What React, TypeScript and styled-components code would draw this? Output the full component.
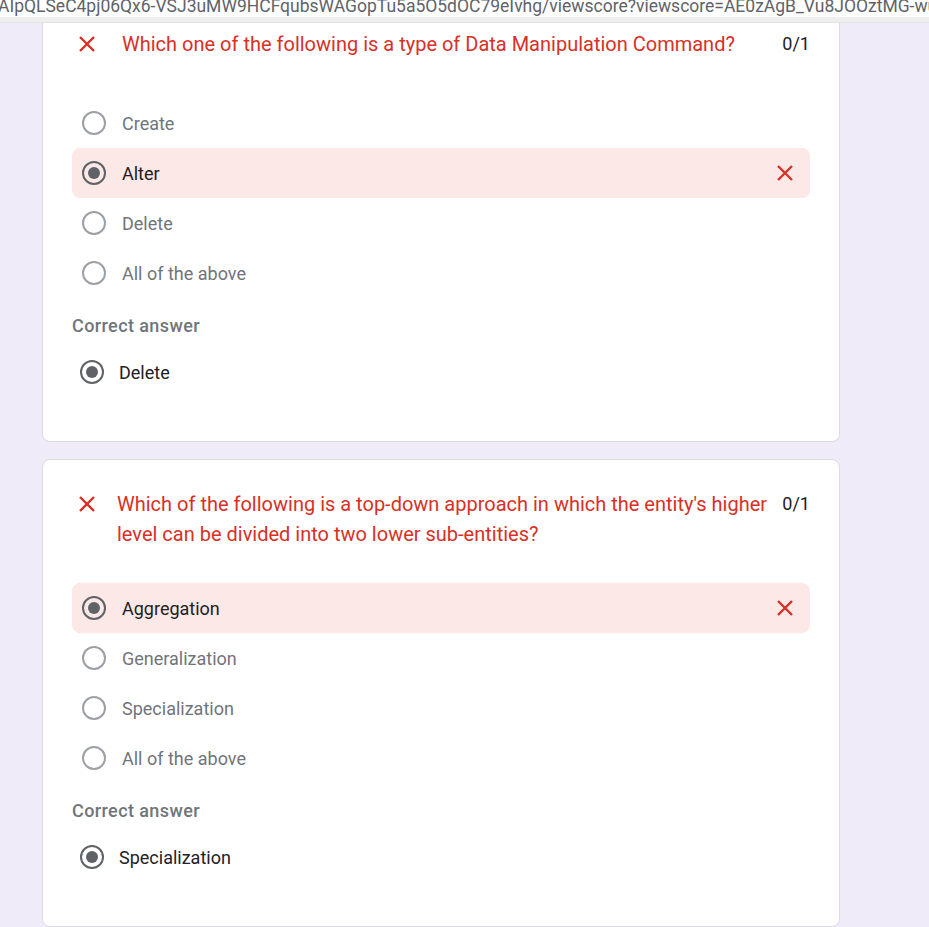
import React from 'react';
import styled, { createGlobalStyle } from 'styled-components';

const GlobalStyle = createGlobalStyle`
  html, body {
    margin: 0;
    padding: 0;
    background: #f0ebf8;
    font-family: Roboto, "Noto Sans", Arial, sans-serif;
  }
`;

const UrlBar = styled.div`
  height: 17px;
  background: #ffffff;
  overflow: hidden;
  display: flex;
  align-items: flex-end;
  white-space: nowrap;
`;

const UrlText = styled.span`
  font-size: 17.5px;
  line-height: 22px;
  color: #5f6368;
  margin-left: -2px;
`;

const Divider = styled.div`
  height: 5px;
  background: #eeeeee;
  border-bottom: 1px solid #e3e3e3;
`;

const Page = styled.div`
  display: flex;
  flex-direction: column;
  gap: 17px;
  padding-left: 42px;
  width: 798px;
  padding-bottom: 1px;
`;

const Card = styled.section<{ $clipped?: boolean }>`
  background: #ffffff;
  border: 1px solid #dadce0;
  border-radius: ${(p) => (p.$clipped ? '0 0 8px 8px' : '8px')};
  border-top: ${(p) => (p.$clipped ? 'none' : '1px solid #dadce0')};
  padding: ${(p) => (p.$clipped ? '6px' : '29px')} 29px 44px 29px;
`;

const Header = styled.div<{ $space: number; $indent: number }>`
  display: flex;
  align-items: flex-start;
  margin-bottom: ${(p) => p.$space}px;
  & > svg {
    flex: none;
    margin: 6px ${(p) => p.$indent}px 0 6px;
  }
`;

const Question = styled.div`
  flex: 1;
  font-size: 20px;
  line-height: 30px;
  color: #d93025;
`;

const Score = styled.div`
  flex: none;
  margin-left: 12px;
  margin-right: 0;
  font-size: 18px;
  line-height: 30px;
  color: #202124;
`;

const OptionRow = styled.div<{ $wrong?: boolean; $tight?: boolean }>`
  display: flex;
  align-items: center;
  height: 50px;
  padding: 0 16px 0 ${(p) => (p.$tight ? 8 : 10)}px;
  border-radius: 8px;
  background: ${(p) => (p.$wrong ? '#fce8e6' : 'transparent')};
`;

const Radio = styled.span<{ $checked?: boolean }>`
  flex: none;
  box-sizing: border-box;
  width: 24px;
  height: 24px;
  border-radius: 50%;
  border: 2px solid ${(p) => (p.$checked ? '#5f6368' : '#9aa0a6')};
  display: flex;
  align-items: center;
  justify-content: center;
  &::after {
    content: '';
    width: 12px;
    height: 12px;
    border-radius: 50%;
    background: #5f6368;
    display: ${(p) => (p.$checked ? 'block' : 'none')};
  }
`;

const OptionLabel = styled.span<{ $dark?: boolean; $tight?: boolean }>`
  flex: 1;
  margin-left: ${(p) => (p.$tight ? 15 : 16)}px;
  font-size: 18px;
  color: ${(p) => (p.$dark ? '#202124' : '#70757a')};
`;

const CorrectTitle = styled.div`
  margin-top: 16px;
  margin-bottom: 9px;
  font-size: 18px;
  line-height: 24px;
  font-weight: 500;
  letter-spacing: 0.4px;
  color: #70757a;
`;

const Cross = ({ size = 18 }: { size?: number }) => (
  <svg width={size} height={size} viewBox="0 0 18 18">
    <path d="M2 2 L16 16 M16 2 L2 16" stroke="#d93025" strokeWidth="2.4" fill="none" />
  </svg>
);

type Item = {
  question: string;
  options: string[];
  picked: number;
  correct: string;
  clipped?: boolean;
  space: number;
  indent: number;
};

const items: Item[] = [
  {
    question: 'Which one of the following is a type of Data Manipulation Command?',
    options: ['Create', 'Alter', 'Delete', 'All of the above'],
    picked: 1,
    correct: 'Delete',
    clipped: true,
    space: 39,
    indent: 26,
  },
  {
    question:
      "Which of the following is a top-down approach in which the entity's higher level can be divided into two lower sub-entities?",
    options: ['Aggregation', 'Generalization', 'Specialization', 'All of the above'],
    picked: 0,
    correct: 'Specialization',
    space: 34,
    indent: 21,
  },
];

export default function App() {
  return (
    <>
      <GlobalStyle />
      <UrlBar>
        <UrlText>
          AIpQLSeC4pj06Qx6-VSJ3uMW9HCFqubsWAGopTu5a5O5dOC79eIvhg/viewscore?viewscore=AE0zAgB_Vu8JOOztMG-wubl
        </UrlText>
      </UrlBar>
      <Divider />
      <Page>
        {items.map((it) => (
          <Card key={it.question} $clipped={it.clipped}>
            <Header $space={it.space} $indent={it.indent}>
              <Cross />
              <Question>{it.question}</Question>
              <Score>0/1</Score>
            </Header>
            {it.options.map((opt, i) => (
              <OptionRow key={opt} $wrong={i === it.picked}>
                <Radio $checked={i === it.picked} />
                <OptionLabel $dark={i === it.picked}>{opt}</OptionLabel>
                {i === it.picked && <Cross />}
              </OptionRow>
            ))}
            <CorrectTitle>Correct answer</CorrectTitle>
            <OptionRow $tight>
              <Radio $checked />
              <OptionLabel $dark $tight>
                {it.correct}
              </OptionLabel>
            </OptionRow>
          </Card>
        ))}
      </Page>
    </>
  );
}
